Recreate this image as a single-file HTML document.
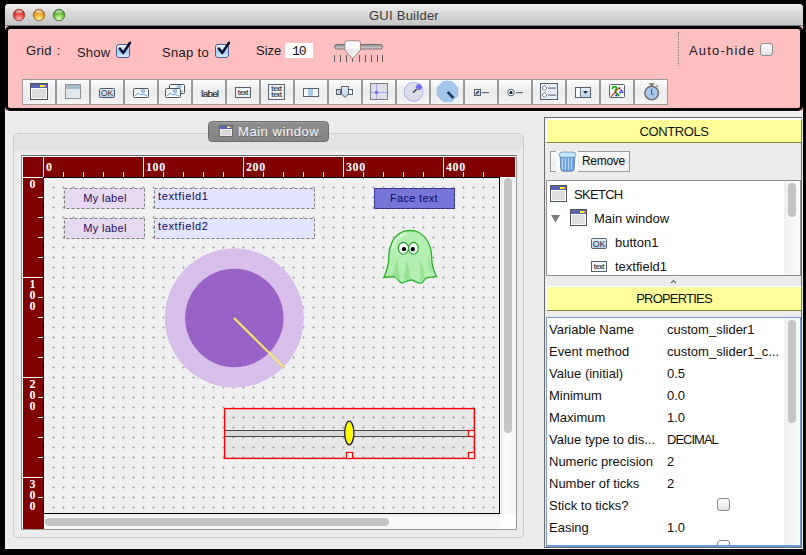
<!DOCTYPE html>
<html><head><meta charset="utf-8">
<style>
*{margin:0;padding:0;box-sizing:border-box}
html,body{width:806px;height:555px;overflow:hidden;background:#000;font-family:"Liberation Sans",sans-serif;position:relative}
div,span,svg{position:absolute}
.lbl{font-size:13px;color:#1a1a1a;white-space:nowrap;line-height:15px}
.btn{top:79px;width:34px;height:26px;background:linear-gradient(#fafafa,#ececec);border:1px solid #a0a0a0;border-left:2px solid #9c9c9c}
.cb{width:14px;height:14px;border-radius:3px;border:1px solid #4a5a9a;background:linear-gradient(#eef8ff,#bcdcfc 45%,#9ccaf6 55%,#d4efff)}
.cbo{width:13px;height:13px;border-radius:3px;border:1px solid #8a8a8a;background:linear-gradient(#ffffff,#f0f0f0 50%,#e2e2e2)}
.yh{background:#ffff99;border:1px solid;border-color:#fff #85854a #85854a #fff;font-size:13px;text-align:center;color:#111;line-height:21px}
.row{font-size:13px;color:#111;white-space:nowrap;line-height:15px}
</style></head><body>
<!-- window body -->
<div id="win" style="left:5px;top:4px;width:798px;height:545px;background:#ececec;border-radius:4px 4px 0 0;overflow:hidden;border-bottom:1px solid #fafafa"></div>
<!-- title bar -->
<div id="title" style="left:5px;top:4px;width:798px;height:22px;border-radius:4px 4px 0 0;background:linear-gradient(#f0f0f0,#d8d8d8 45%,#c6c6c6);border-bottom:1px solid #7c7c7c">
  <svg style="left:0;top:0" width="80" height="22">
<defs>
<radialGradient id="lr" cx="0.5" cy="0.85" r="0.8"><stop offset="0" stop-color="#ffc4bc"/><stop offset="0.5" stop-color="#f05048"/><stop offset="1" stop-color="#b01a18"/></radialGradient>
<radialGradient id="ly" cx="0.5" cy="0.85" r="0.8"><stop offset="0" stop-color="#fff2a8"/><stop offset="0.5" stop-color="#f4b030"/><stop offset="1" stop-color="#b07010"/></radialGradient>
<radialGradient id="lg" cx="0.5" cy="0.85" r="0.8"><stop offset="0" stop-color="#e4ffc8"/><stop offset="0.5" stop-color="#80cc50"/><stop offset="1" stop-color="#3a8a22"/></radialGradient>
<linearGradient id="lh" x1="0" y1="0" x2="0" y2="1"><stop offset="0" stop-color="#fff" stop-opacity="0.9"/><stop offset="1" stop-color="#fff" stop-opacity="0"/></linearGradient>
</defs>
<circle cx="14" cy="11" r="5.7" fill="url(#lr)" stroke="#8a3030" stroke-width="0.8"/>
<ellipse cx="14" cy="8.2" rx="3.3" ry="2" fill="url(#lh)"/>
<circle cx="34" cy="11" r="5.7" fill="url(#ly)" stroke="#8a6020" stroke-width="0.8"/>
<ellipse cx="34" cy="8.2" rx="3.3" ry="2" fill="url(#lh)"/>
<circle cx="54" cy="11" r="5.7" fill="url(#lg)" stroke="#3a6a2a" stroke-width="0.8"/>
<ellipse cx="54" cy="8.2" rx="3.3" ry="2" fill="url(#lh)"/>
</svg>
<div class="lbl" style="left:364px;top:4px;color:#383838;letter-spacing:0.25px">GUI Builder</div>
</div>
<!-- pink toolbar -->
<div style="left:5px;top:26px;width:798px;height:85px;background:#ffbfbf"></div>
<div id="tbi" style="left:5px;top:26px;width:798px;height:85px;border:3px solid #000;border-radius:5px;background:#ffbfbf"></div>
<div style="left:5px;top:111px;width:798px;height:1px;background:#fafafa"></div>

<div class="lbl" style="left:26px;top:43px;letter-spacing:0.3px;word-spacing:1px">Grid :</div>
<div class="lbl" style="left:77px;top:45px;letter-spacing:0.2px">Show</div>
<div class="cb" style="left:116px;top:44px"></div>
<div class="lbl" style="left:162px;top:45px;letter-spacing:0.3px">Snap to</div>
<div class="cb" style="left:215px;top:44px"></div>
<div class="lbl" style="left:256px;top:43px">Size</div>
<div style="left:285px;top:43px;width:28px;height:15px;background:#fff"></div>
<div style="left:292px;top:44px;font-family:'Liberation Mono',monospace;font-size:13px;line-height:15px;color:#111;letter-spacing:-1px">10</div>
<div style="left:678px;top:32px;width:1px;height:34px;border-left:1px dotted #777"></div>
<div class="lbl" style="left:689px;top:43px;letter-spacing:1.2px">Auto-hide</div>
<div class="cbo" style="left:760px;top:43px"></div>
<svg style="left:0;top:0" width="806" height="555">
<path d="M119.8,48.6 L123.3,52.9 L130,42.8" fill="none" stroke="#0a1030" stroke-width="2.6" stroke-linecap="round" stroke-linejoin="round"/>
<path d="M218.8,48.6 L222.3,52.9 L229,42.8" fill="none" stroke="#0a1030" stroke-width="2.6" stroke-linecap="round" stroke-linejoin="round"/>
<defs><linearGradient id="trk" x1="0" y1="0" x2="0" y2="1"><stop offset="0" stop-color="#8e8e8e"/><stop offset="1" stop-color="#d4d4d4"/></linearGradient>
<linearGradient id="thb" x1="0" y1="0" x2="0" y2="1"><stop offset="0" stop-color="#ffffff"/><stop offset="0.45" stop-color="#f4f4f4"/><stop offset="0.5" stop-color="#e6e6e6"/><stop offset="1" stop-color="#f2f2f2"/></linearGradient></defs>
<rect x="334.5" y="44.5" width="48" height="4.5" rx="2.2" fill="url(#trk)" stroke="#5c5c5c" stroke-width="0.8"/>
<rect x="334" y="55" width="1" height="7" fill="#5c5c5c"/><rect x="340" y="55" width="1" height="7" fill="#5c5c5c"/><rect x="346" y="55" width="1" height="7" fill="#5c5c5c"/><rect x="352" y="55" width="1" height="7" fill="#5c5c5c"/><rect x="359" y="55" width="1" height="7" fill="#5c5c5c"/><rect x="365" y="55" width="1" height="7" fill="#5c5c5c"/><rect x="371" y="55" width="1" height="7" fill="#5c5c5c"/><rect x="377" y="55" width="1" height="7" fill="#5c5c5c"/><rect x="382" y="55" width="1" height="7" fill="#5c5c5c"/><path d="M344.8,43 Q344.8,40.8 347,40.8 L358.3,40.8 Q360.5,40.8 360.5,43 L360.5,50.2 L352.6,58.8 L344.8,50.2 Z" fill="url(#thb)" stroke="#8a7070" stroke-width="0.8"/>

</svg>
<svg id="tbsvg" style="left:0;top:0" width="806" height="555" viewBox="0 0 806 555">
<defs>
<linearGradient id="bg" x1="0" y1="0" x2="0" y2="1"><stop offset="0" stop-color="#fdfdfd"/><stop offset="0.5" stop-color="#ebebeb"/><stop offset="1" stop-color="#f4f4f4"/></linearGradient>
<linearGradient id="blu" x1="0" y1="0" x2="0" y2="1"><stop offset="0" stop-color="#e6f0fc"/><stop offset="1" stop-color="#b4cdee"/></linearGradient>
<style>.ti{font-family:"Liberation Sans",sans-serif;fill:#3a3f44}</style>
</defs>
<rect x="22.5" y="79.5" width="33" height="25" fill="url(#bg)" stroke="#9a9a9a" shape-rendering="crispEdges"/>
<rect x="23" y="80" width="32" height="1" fill="#fff" shape-rendering="crispEdges"/>
<rect x="56.5" y="79.5" width="33" height="25" fill="url(#bg)" stroke="#9a9a9a" shape-rendering="crispEdges"/>
<rect x="57" y="80" width="32" height="1" fill="#fff" shape-rendering="crispEdges"/>
<rect x="90.5" y="79.5" width="33" height="25" fill="url(#bg)" stroke="#9a9a9a" shape-rendering="crispEdges"/>
<rect x="91" y="80" width="32" height="1" fill="#fff" shape-rendering="crispEdges"/>
<rect x="124.5" y="79.5" width="33" height="25" fill="url(#bg)" stroke="#9a9a9a" shape-rendering="crispEdges"/>
<rect x="125" y="80" width="32" height="1" fill="#fff" shape-rendering="crispEdges"/>
<rect x="158.5" y="79.5" width="33" height="25" fill="url(#bg)" stroke="#9a9a9a" shape-rendering="crispEdges"/>
<rect x="159" y="80" width="32" height="1" fill="#fff" shape-rendering="crispEdges"/>
<rect x="192.5" y="79.5" width="33" height="25" fill="url(#bg)" stroke="#9a9a9a" shape-rendering="crispEdges"/>
<rect x="193" y="80" width="32" height="1" fill="#fff" shape-rendering="crispEdges"/>
<rect x="226.5" y="79.5" width="33" height="25" fill="url(#bg)" stroke="#9a9a9a" shape-rendering="crispEdges"/>
<rect x="227" y="80" width="32" height="1" fill="#fff" shape-rendering="crispEdges"/>
<rect x="260.5" y="79.5" width="33" height="25" fill="url(#bg)" stroke="#9a9a9a" shape-rendering="crispEdges"/>
<rect x="261" y="80" width="32" height="1" fill="#fff" shape-rendering="crispEdges"/>
<rect x="294.5" y="79.5" width="33" height="25" fill="url(#bg)" stroke="#9a9a9a" shape-rendering="crispEdges"/>
<rect x="295" y="80" width="32" height="1" fill="#fff" shape-rendering="crispEdges"/>
<rect x="328.5" y="79.5" width="33" height="25" fill="url(#bg)" stroke="#9a9a9a" shape-rendering="crispEdges"/>
<rect x="329" y="80" width="32" height="1" fill="#fff" shape-rendering="crispEdges"/>
<rect x="362.5" y="79.5" width="33" height="25" fill="url(#bg)" stroke="#9a9a9a" shape-rendering="crispEdges"/>
<rect x="363" y="80" width="32" height="1" fill="#fff" shape-rendering="crispEdges"/>
<rect x="396.5" y="79.5" width="33" height="25" fill="url(#bg)" stroke="#9a9a9a" shape-rendering="crispEdges"/>
<rect x="397" y="80" width="32" height="1" fill="#fff" shape-rendering="crispEdges"/>
<rect x="430.5" y="79.5" width="33" height="25" fill="url(#bg)" stroke="#9a9a9a" shape-rendering="crispEdges"/>
<rect x="431" y="80" width="32" height="1" fill="#fff" shape-rendering="crispEdges"/>
<rect x="464.5" y="79.5" width="33" height="25" fill="url(#bg)" stroke="#9a9a9a" shape-rendering="crispEdges"/>
<rect x="465" y="80" width="32" height="1" fill="#fff" shape-rendering="crispEdges"/>
<rect x="498.5" y="79.5" width="33" height="25" fill="url(#bg)" stroke="#9a9a9a" shape-rendering="crispEdges"/>
<rect x="499" y="80" width="32" height="1" fill="#fff" shape-rendering="crispEdges"/>
<rect x="532.5" y="79.5" width="33" height="25" fill="url(#bg)" stroke="#9a9a9a" shape-rendering="crispEdges"/>
<rect x="533" y="80" width="32" height="1" fill="#fff" shape-rendering="crispEdges"/>
<rect x="566.5" y="79.5" width="33" height="25" fill="url(#bg)" stroke="#9a9a9a" shape-rendering="crispEdges"/>
<rect x="567" y="80" width="32" height="1" fill="#fff" shape-rendering="crispEdges"/>
<rect x="600.5" y="79.5" width="33" height="25" fill="url(#bg)" stroke="#9a9a9a" shape-rendering="crispEdges"/>
<rect x="601" y="80" width="32" height="1" fill="#fff" shape-rendering="crispEdges"/>
<rect x="634.5" y="79.5" width="33" height="25" fill="url(#bg)" stroke="#9a9a9a" shape-rendering="crispEdges"/>
<rect x="635" y="80" width="32" height="1" fill="#fff" shape-rendering="crispEdges"/>
<g><rect x="30.5" y="83.5" width="17" height="16" fill="#fff" stroke="#4a5258"/><rect x="31" y="84" width="16" height="4" fill="#5a62b6"/><rect x="40" y="85" width="4" height="2" fill="#ffff00"/><rect x="44" y="85" width="2" height="2" fill="#f08888"/><rect x="32" y="89" width="14" height="9" fill="#dcdcdc"/><rect x="65.5" y="84.5" width="15" height="14" fill="#dfe8ec" stroke="#959595"/><rect x="66" y="85" width="14" height="4" fill="#a3bccb"/><rect x="99.5" y="88.5" width="15" height="9" rx="1" fill="url(#blu)" stroke="#4e565e"/><text x="107" y="96.3" class="ti" font-size="8.8" text-anchor="middle" letter-spacing="0">OK</text><rect x="133.5" y="88.5" width="15" height="9" rx="1" fill="#f4faff" stroke="#4e565e"/><path d="M135,96 L138,93 L141,95 L143,94 L147,96" fill="none" stroke="#6ea0d8" stroke-width="1"/><circle cx="143" cy="91" r="1.8" fill="#a8c8ec" stroke="#6ea0d8" stroke-width="0.7"/><rect x="169.5" y="84.5" width="15" height="9" rx="1" fill="#f4faff" stroke="#4e565e"/><path d="M171,92 L174,89 L177,91 L179,90 L183,92" fill="none" stroke="#6ea0d8" stroke-width="1"/><circle cx="179" cy="87" r="1.8" fill="#a8c8ec" stroke="#6ea0d8" stroke-width="0.7"/><rect x="165.5" y="88.5" width="15" height="9" rx="1" fill="#f4faff" stroke="#4e565e"/><path d="M167,96 L170,93 L173,95 L175,94 L179,96" fill="none" stroke="#6ea0d8" stroke-width="1"/><circle cx="175" cy="91" r="1.8" fill="#a8c8ec" stroke="#6ea0d8" stroke-width="0.7"/><text x="209.8" y="96.8" class="ti" font-size="9.8" text-anchor="middle" letter-spacing="-0.75" style="fill:#2a2e33;stroke:#2a2e33;stroke-width:0.2">label</text><rect x="235.5" y="87.5" width="15" height="10" fill="#f0f6fc" stroke="#59616a"/><text x="243" y="94.5" class="ti" font-size="6.5" font-weight="bold" text-anchor="middle" letter-spacing="-0.3">text</text><rect x="268.5" y="84.5" width="16" height="15" fill="#eef4fa" stroke="#59616a"/><text x="276.5" y="90.5" class="ti" font-size="6.5" font-weight="bold" text-anchor="middle" letter-spacing="-0.3">text</text><text x="276.5" y="97" class="ti" font-size="6.5" font-weight="bold" text-anchor="middle" letter-spacing="-0.3">text</text><rect x="303.5" y="88.5" width="15" height="8" fill="#fafafa" stroke="#59616a"/><rect x="308" y="89" width="5" height="7" fill="#a8c8ec"/><rect x="336.5" y="89.5" width="4" height="5" fill="#b8d4f0" stroke="#59616a"/><rect x="348.5" y="89.5" width="4" height="5" fill="#f4f8fc" stroke="#59616a"/><path d="M341.5,86.5 L348.5,86.5 L348.5,94 L345,97.5 L341.5,94 Z" fill="url(#blu)" stroke="#59616a"/><rect x="370.5" y="83.5" width="17" height="16" fill="#e0e0ea" stroke="#808080" stroke-width="1"/><rect x="376" y="84" width="1" height="15" fill="#a8a8ff"/><rect x="371" y="92" width="16" height="1" fill="#a8a8ff"/><rect x="375" y="91" width="3" height="3" fill="#7070f8"/><circle cx="413.5" cy="91.9" r="9.4" fill="#dcdce8" stroke="#a8a8f4" stroke-width="0.9"/><line x1="413" y1="92.8" x2="416.7" y2="89.1" stroke="#222" stroke-width="1.3"/><rect x="416.2" y="84.2" width="5.6" height="5.6" rx="1.2" fill="#6c6cf4" transform="rotate(45 419 87)"/><path d="M443.5,81 L451.5,81 L458,87.5 L458,95.5 L451.5,102 L443.5,102 L437,95.5 L437,87.5 Z" fill="#a4c6ea" stroke="#a4c6ea" stroke-width="2.5" stroke-linejoin="round" transform="translate(447.5 91.5) scale(0.92) translate(-447.5 -91.5)"/><line x1="447.6" y1="91.8" x2="453.4" y2="98" stroke="#1a3a5a" stroke-width="2.6"/><rect x="474.5" y="89.5" width="6" height="6" fill="url(#blu)" stroke="#59616a"/><path d="M476,94 L479,91" stroke="#222" stroke-width="1.2"/><rect x="482" y="92" width="7" height="1.2" fill="#667078"/><circle cx="511" cy="92.5" r="3.3" fill="#eef6ff" stroke="#59616a"/><circle cx="511" cy="92.5" r="1.5" fill="#111"/><rect x="516" y="92" width="7" height="1.2" fill="#667078"/><rect x="540.5" y="83.5" width="17" height="16" fill="#e6eef6" stroke="#59616a"/><path d="M544.5,85.5 L547,88 L544.5,90.5 L542,88 Z" fill="#fff" stroke="#666" stroke-width="0.8"/><rect x="548" y="87.5" width="8" height="1.2" fill="#6c7680"/><path d="M544.5,92.5 L547,95 L544.5,97.5 L542,95 Z" fill="#fff" stroke="#666" stroke-width="0.8"/><rect x="548" y="94.5" width="8" height="1.2" fill="#6c7680"/><rect x="575.5" y="87.5" width="15" height="10" fill="url(#blu)" stroke="#59616a"/><rect x="576" y="88" width="4" height="9" fill="#fafafa"/><rect x="580" y="88" width="0.8" height="9" fill="#59616a"/><path d="M583,91 L588,91 L585.5,94 Z" fill="#333"/><rect x="609.5" y="84.5" width="15" height="13" rx="1" fill="#fbfbfb" stroke="#59616a"/><path d="M612.5,88.5 C612.5,86 616.5,86 616.5,88.2 C616.5,90 614,90.5 615.5,92.5 L618.8,95.5" fill="none" stroke="#00b400" stroke-width="1.7" stroke-linecap="round"/><circle cx="619.5" cy="88.2" r="1" fill="#1a1aff"/><circle cx="621.2" cy="90.6" r="1" fill="#1a1aff"/><circle cx="622.5" cy="92.3" r="1" fill="#1a1aff"/><circle cx="620" cy="92.5" r="0.9" fill="#1a1aff"/><circle cx="616.2" cy="95.6" r="1" fill="#1a1aff"/><line x1="611" y1="96.8" x2="618.8" y2="87.8" stroke="#ff2020" stroke-width="1.1"/><circle cx="651.7" cy="93" r="6.8" fill="#a8c8ec" stroke="#6e6e6e" stroke-width="1.5"/><rect x="650.5" y="84.2" width="2.4" height="2.2" fill="#6e6e6e"/><rect x="649" y="83.2" width="5.5" height="1.2" fill="#6e6e6e"/><rect x="656.6" y="85.3" width="1.6" height="1.6" fill="#6e6e6e" transform="rotate(45 657.4 86.1)"/><line x1="651.6" y1="88.8" x2="651.6" y2="94.2" stroke="#505050" stroke-width="1"/><line x1="651.6" y1="94.2" x2="653.6" y2="94.2" stroke="#505050" stroke-width="1"/></g>
</svg>

<!-- left group -->
<div style="left:13px;top:133px;width:511px;height:405px;border:1px solid #cdcdcd;border-radius:5px;background:#ebebeb"></div>
<div style="left:14px;top:134px;width:509px;height:16px;border-radius:4px 4px 0 0;background:#e3e3e3"></div>

<!-- right panel -->
<div style="left:544px;top:117px;width:258px;height:431px;border:1px solid #6a6a6a;background:#ececec"></div>
<div class="yh" style="left:545px;top:118px;width:257px;height:25px;border-width:2px 1px 1px 2px;line-height:24px;letter-spacing:-0.4px">CONTROLS</div>
<div class="yh" style="left:546px;top:286px;width:256px;height:25px;line-height:23px;letter-spacing:-0.8px">PROPERTIES</div>


<svg id="cv" style="left:0;top:0" width="806" height="555" viewBox="0 0 806 555">
<defs>
<pattern id="grid" patternUnits="userSpaceOnUse" x="38" y="172" width="10" height="10">
<rect x="4" y="5" width="3" height="1" fill="#c2c2c2"/><rect x="5" y="4" width="1" height="3" fill="#c2c2c2"/><rect x="5" y="5" width="1" height="1" fill="#a8a8a8"/>
</pattern>
<style>.rn{font-family:"Liberation Serif",serif;font-weight:bold;font-size:12px;fill:#fff;letter-spacing:0.6px}
.wt{font-family:"Liberation Sans",sans-serif;font-size:11px}</style>
</defs>
<g shape-rendering="crispEdges">
<rect x="21" y="155" width="496" height="375" fill="#f6f6f6"/>
<rect x="21" y="155" width="496" height="1" fill="#6e6e6e"/>
<rect x="21" y="155" width="1" height="375" fill="#8a8a8a"/>
<rect x="516" y="155" width="1" height="375" fill="#9a9a9a"/>
<rect x="21" y="529" width="496" height="1" fill="#9a9a9a"/>
<rect x="22" y="156" width="494" height="1" fill="#fff"/>
<rect x="22" y="156" width="1" height="373" fill="#fff"/>
<rect x="23" y="157" width="492" height="20" fill="#800000"/>
<rect x="23" y="157" width="21" height="372" fill="#800000"/>
<rect x="44" y="177" width="456" height="337" fill="#f0f0f0"/>
<rect x="44" y="177" width="456" height="337" fill="url(#grid)"/>
<rect x="43" y="157" width="1" height="20" fill="#fff"/>
<text x="46" y="171" class="rn">0</text>
<rect x="63" y="172" width="1" height="5" fill="#fff"/>
<rect x="83" y="172" width="1" height="5" fill="#fff"/>
<rect x="103" y="172" width="1" height="5" fill="#fff"/>
<rect x="123" y="172" width="1" height="5" fill="#fff"/>
<rect x="143" y="157" width="1" height="20" fill="#fff"/>
<text x="146" y="171" class="rn">100</text>
<rect x="163" y="172" width="1" height="5" fill="#fff"/>
<rect x="183" y="172" width="1" height="5" fill="#fff"/>
<rect x="203" y="172" width="1" height="5" fill="#fff"/>
<rect x="223" y="172" width="1" height="5" fill="#fff"/>
<rect x="243" y="157" width="1" height="20" fill="#fff"/>
<text x="246" y="171" class="rn">200</text>
<rect x="263" y="172" width="1" height="5" fill="#fff"/>
<rect x="283" y="172" width="1" height="5" fill="#fff"/>
<rect x="303" y="172" width="1" height="5" fill="#fff"/>
<rect x="323" y="172" width="1" height="5" fill="#fff"/>
<rect x="343" y="157" width="1" height="20" fill="#fff"/>
<text x="346" y="171" class="rn">300</text>
<rect x="363" y="172" width="1" height="5" fill="#fff"/>
<rect x="383" y="172" width="1" height="5" fill="#fff"/>
<rect x="403" y="172" width="1" height="5" fill="#fff"/>
<rect x="423" y="172" width="1" height="5" fill="#fff"/>
<rect x="443" y="157" width="1" height="20" fill="#fff"/>
<text x="446" y="171" class="rn">400</text>
<rect x="463" y="172" width="1" height="5" fill="#fff"/>
<rect x="483" y="172" width="1" height="5" fill="#fff"/>
<rect x="23" y="177" width="20" height="1" fill="#fff"/>
<text x="32.8" y="188" class="rn" text-anchor="middle">0</text>
<rect x="38" y="197" width="5" height="1" fill="#fff"/>
<rect x="38" y="217" width="5" height="1" fill="#fff"/>
<rect x="38" y="237" width="5" height="1" fill="#fff"/>
<rect x="38" y="257" width="5" height="1" fill="#fff"/>
<rect x="23" y="277" width="20" height="1" fill="#fff"/>
<text x="32.8" y="288" class="rn" text-anchor="middle">1</text>
<text x="32.8" y="299" class="rn" text-anchor="middle">0</text>
<text x="32.8" y="310" class="rn" text-anchor="middle">0</text>
<rect x="38" y="297" width="5" height="1" fill="#fff"/>
<rect x="38" y="317" width="5" height="1" fill="#fff"/>
<rect x="38" y="337" width="5" height="1" fill="#fff"/>
<rect x="38" y="357" width="5" height="1" fill="#fff"/>
<rect x="23" y="377" width="20" height="1" fill="#fff"/>
<text x="32.8" y="388" class="rn" text-anchor="middle">2</text>
<text x="32.8" y="399" class="rn" text-anchor="middle">0</text>
<text x="32.8" y="410" class="rn" text-anchor="middle">0</text>
<rect x="38" y="397" width="5" height="1" fill="#fff"/>
<rect x="38" y="417" width="5" height="1" fill="#fff"/>
<rect x="38" y="437" width="5" height="1" fill="#fff"/>
<rect x="38" y="457" width="5" height="1" fill="#fff"/>
<rect x="23" y="477" width="20" height="1" fill="#fff"/>
<text x="32.8" y="488" class="rn" text-anchor="middle">3</text>
<text x="32.8" y="499" class="rn" text-anchor="middle">0</text>
<text x="32.8" y="510" class="rn" text-anchor="middle">0</text>
<rect x="38" y="497" width="5" height="1" fill="#fff"/>

<rect x="43" y="177" width="457" height="1" fill="#000"/>
<rect x="43" y="177" width="1" height="337" fill="#000"/>
<rect x="499" y="177" width="1" height="337" fill="#000"/>
<rect x="43" y="513" width="457" height="1" fill="#000"/>
</g>

<!-- widgets -->
<g>
<rect x="64.5" y="188.5" width="80" height="20" fill="#e6daf2" stroke="#7a7a7a" stroke-dasharray="3 2"/>
<text x="105" y="202" class="wt" text-anchor="middle" fill="#2e0a5c" letter-spacing="0.3">My label</text>
<rect x="64.5" y="218.5" width="80" height="20" fill="#e6daf2" stroke="#7a7a7a" stroke-dasharray="3 2"/>
<text x="105" y="232" class="wt" text-anchor="middle" fill="#2e0a5c" letter-spacing="0.3">My label</text>
<rect x="154.5" y="188.5" width="160" height="20" fill="#e2e4fc" stroke="#7a7a7a" stroke-dasharray="3 2"/>
<text x="158" y="200" class="wt" fill="#0a0a6e" letter-spacing="0.65">textfield1</text>
<rect x="154.5" y="218.5" width="160" height="20" fill="#e2e4fc" stroke="#7a7a7a" stroke-dasharray="3 2"/>
<text x="158" y="230" class="wt" fill="#0a0a6e" letter-spacing="0.65">textfield2</text>
<rect x="374.5" y="188.5" width="80" height="20" fill="#7676d8" stroke="#4a4ae0"/>
<rect x="374.5" y="188.5" width="80" height="20" fill="none" stroke="#333366" stroke-dasharray="3 2"/>
<text x="414" y="202" class="wt" text-anchor="middle" fill="#0c0c64" letter-spacing="0.3">Face text</text>
<circle cx="234.3" cy="318" r="69.5" fill="#d7bfe9"/>
<circle cx="234.3" cy="318" r="49.2" fill="#9962c6"/>
<line x1="234" y1="318" x2="283.5" y2="367" stroke="#f4ea64" stroke-width="2"/>
</g>
<!-- slider -->
<g>
<rect x="224.5" y="408.5" width="250" height="50" fill="#000" fill-opacity="0.035"/>
<rect x="224" y="430" width="245" height="7" fill="#dadada"/>
<rect x="224" y="430" width="245" height="1" fill="#4a4a4a"/>
<rect x="224" y="436" width="245" height="1" fill="#4a4a4a"/>
<rect x="224.6" y="408.6" width="249.8" height="49.8" fill="none" stroke="#ff0000" stroke-width="1.4"/>
<ellipse cx="349.3" cy="433" rx="4.6" ry="11.8" fill="#ffff00" stroke="#1c1c48" stroke-width="1.3"/>
<rect x="346.5" y="452.5" width="6" height="6" fill="#fff" stroke="#ff0000" stroke-width="1.2"/>
<rect x="468.5" y="430.5" width="6" height="6" fill="#fff" stroke="#ff0000" stroke-width="1.2"/>
<rect x="468.5" y="452.5" width="6" height="6" fill="#fff" stroke="#ff0000" stroke-width="1.2"/>
</g>
<!-- ghost -->
<g>
<path d="M384.1,277.3 C387,270 389,265 388.8,258 C388.5,247 393,236 402,232 C406,230 414,230 418,232 C427,237 431.5,247 431.7,258 C431.8,265 433,270 436.6,276.6 C433,277 429,277 426.2,278.1 C424,280 422.5,283.5 420.2,283.3 C417,283 414,280 411.3,280 C407,280 404,283 401.6,282.9 C399,282.5 397,277 394.1,276.6 C390,276.5 387,277.5 384.1,277.3 Z" fill="#b3efb0" stroke="#26b026" stroke-width="1.3"/>
<path d="M393,247 C394,240 399,236 405,234" fill="none" stroke="#d6f8d4" stroke-width="2.5" stroke-linecap="round"/>
<path d="M392,275 C395,268 396,262 397,258 C398,265 399,272 400,281 Z" fill="#90dc8c" opacity="0.7"/>
<path d="M404,279 C405,270 406,264 407,261 C409,268 410,274 410,280 Z" fill="#90dc8c" opacity="0.8"/>
<path d="M420,281 C421,272 420,265 419,260 C423,266 425,272 425,278 Z" fill="#90dc8c" opacity="0.7"/>
<path d="M430,270 C428,265 427,260 428,255 C431,262 433,268 434,273 Z" fill="#90dc8c" opacity="0.5"/>
<ellipse cx="403.4" cy="248.3" rx="5.1" ry="5.9" fill="#fff" stroke="#26a026" stroke-width="1.1"/>
<ellipse cx="413.5" cy="248.3" rx="4.8" ry="5.9" fill="#fff" stroke="#26a026" stroke-width="1.1"/>
<circle cx="404" cy="249.2" r="2.1" fill="#000"/>
<circle cx="412.8" cy="249.2" r="2.1" fill="#000"/>
</g>

<!-- scrollbars -->
<defs><linearGradient id="vtr" x1="0" y1="0" x2="1" y2="0"><stop offset="0" stop-color="#ededed"/><stop offset="0.35" stop-color="#fafafa"/><stop offset="1" stop-color="#f6f6f6"/></linearGradient>
<linearGradient id="htr" x1="0" y1="0" x2="0" y2="1"><stop offset="0" stop-color="#ededed"/><stop offset="0.35" stop-color="#fafafa"/><stop offset="1" stop-color="#f6f6f6"/></linearGradient></defs>
<rect x="500" y="178" width="16" height="336" fill="url(#vtr)"/>
<rect x="44" y="514" width="456" height="15" fill="url(#htr)"/>
<rect x="504" y="178" width="8" height="255" rx="4" fill="#c4c4c4"/>
<rect x="45" y="518" width="344" height="8" rx="4" fill="#c4c4c4"/>
<rect x="500" y="514" width="16" height="15" fill="#fff"/>
</svg>


<!-- Main window tab -->
<div style="left:208px;top:121px;width:121px;height:21px;border-radius:4px;background:linear-gradient(#8e8e8e,#848484);border:1px solid #6e6e6e;box-shadow:inset 0 1px 0 #a0a0a0"></div>
<svg style="left:0;top:0" width="806" height="555">
<rect x="219.5" y="125.5" width="13" height="11" fill="#f0f0f0" stroke="#5a5a5a" stroke-width="0.8"/>
<rect x="220" y="126" width="12" height="3" fill="#5a62b6"/>
<rect x="227" y="126.5" width="3" height="1.5" fill="#ffff40"/><rect x="230" y="126.5" width="1.5" height="1.5" fill="#f08888"/>
<rect x="221" y="130" width="10" height="5.5" fill="#d8d8d8"/>
</svg>
<div class="lbl" style="left:238px;top:124px;color:#f8f8f8;letter-spacing:0.55px;text-shadow:0 1px 0 rgba(0,0,0,0.3)">Main window</div>

<!-- Remove button -->
<div style="left:550px;top:151px;width:80px;height:21px;border:1px solid #9a9a9a;background:linear-gradient(#fdfdfd,#ececec 60%,#f6f6f6)"></div>
<div style="left:556px;top:151px;width:22px;height:21px;background:#fafafa"></div>
<svg style="left:0;top:0" width="806" height="555">
<defs><linearGradient id="tr" x1="0" y1="0" x2="1" y2="0"><stop offset="0" stop-color="#5a8ed8"/><stop offset="0.4" stop-color="#a8d0f8"/><stop offset="1" stop-color="#4a7ec8"/></linearGradient></defs>
<path d="M560.2,156 L560.8,169 Q561,171.3 563,171.3 L572,171.3 Q574,171.3 574.2,169 L574.8,156 Z" fill="#6a9ee0" stroke="#5a7aa8" stroke-width="0.8"/>
<path d="M562.3,158 L562.6,169.5 M565.3,158 L565.4,170 M568.5,158 L568.5,170 M571.6,158 L571.5,169.5" stroke="#b4dcfc" stroke-width="1.2"/>
<path d="M559.3,154.5 Q559.3,152 562,152 L573,152 Q575.7,152 575.7,154.5 L575.7,155.5 Q575.7,157.3 573,157.3 L562,157.3 Q559.3,157.3 559.3,155.5 Z" fill="#c4e6fa" stroke="#6a8ab8" stroke-width="0.8"/>
</svg>
<div style="left:582px;top:154px;font-size:12px;color:#111;line-height:14px;white-space:nowrap;letter-spacing:-0.3px">Remove</div>

<!-- tree box -->
<div style="left:546px;top:180px;width:255px;height:96px;border:1px solid #8e8e8e;background:#fff"></div>
<div style="left:784px;top:181px;width:16px;height:94px;background:linear-gradient(90deg,#f0f0f0,#fafafa)"></div>
<div style="left:788px;top:183px;width:8px;height:34px;border-radius:4px;background:#c4c4c4"></div>
<svg style="left:0;top:0" width="806" height="555">
<defs><symbol id="wicon" viewBox="0 0 17 17">
<rect x="0.5" y="0.5" width="16" height="16" fill="#fff" stroke="#4e565c"/>
<rect x="1" y="1" width="15" height="4" fill="#5a62b6"/>
<rect x="10" y="2" width="4" height="2" fill="#ffff00"/><rect x="14" y="2" width="1.5" height="2" fill="#f08888"/>
<rect x="2" y="6" width="13" height="9" fill="#dedede"/>
</symbol></defs>
<use href="#wicon" x="550" y="185" width="17" height="17"/>
<use href="#wicon" x="570" y="209" width="17" height="17"/>
<path d="M551,215 L560,215 L555.5,222.5 Z" fill="#7a7a7a"/>
<rect x="591.5" y="238.5" width="15" height="10" rx="1" fill="url(#blu)" stroke="#59616a"/>
<text x="599" y="246.5" font-family="Liberation Sans" font-size="8.8" fill="#2a3038" text-anchor="middle">OK</text>
<rect x="591.5" y="261.5" width="15" height="10" fill="#f0f6fc" stroke="#59616a"/>
<text x="599" y="268.5" font-family="Liberation Sans" font-size="6.5" font-weight="bold" fill="#3a3f44" text-anchor="middle" letter-spacing="-0.3">text</text>
</svg>
<div class="row" style="left:574px;top:187px;letter-spacing:-0.7px">SKETCH</div>
<div class="row" style="left:594px;top:211px">Main window</div>
<div class="row" style="left:615px;top:235px">button1</div>
<div class="row" style="left:615px;top:259px">textfield1</div>
<svg style="left:0;top:0" width="806" height="555"><path d="M671,283 L673.5,280.5 L676,283" fill="none" stroke="#6a6a6a" stroke-width="1.2"/></svg>

<!-- properties box -->
<div style="left:546px;top:317px;width:255px;height:230px;border:1px solid #7a9cc8;border-bottom:2px solid #6c9ad4;background:#fff"></div>
<div style="left:784px;top:318px;width:16px;height:227px;background:linear-gradient(90deg,#f0f0f0,#fafafa)"></div>
<div style="left:788px;top:320px;width:8px;height:103px;border-radius:4px;background:#c4c4c4"></div>
<div class="row" style="left:549px;top:322px">Variable Name</div>
<div class="row" style="left:667px;top:322px">custom_slider1</div>
<div class="row" style="left:549px;top:344px">Event method</div>
<div class="row" style="left:667px;top:344px">custom_slider1_c...</div>
<div class="row" style="left:549px;top:366px">Value (initial)</div>
<div class="row" style="left:667px;top:366px">0.5</div>
<div class="row" style="left:549px;top:388px">Minimum</div>
<div class="row" style="left:667px;top:388px">0.0</div>
<div class="row" style="left:549px;top:410px">Maximum</div>
<div class="row" style="left:667px;top:410px">1.0</div>
<div class="row" style="left:549px;top:432px">Value type to dis...</div>
<div class="row" style="left:667px;top:432px;letter-spacing:-1px">DECIMAL</div>
<div class="row" style="left:549px;top:454px">Numeric precision</div>
<div class="row" style="left:667px;top:454px">2</div>
<div class="row" style="left:549px;top:476px">Number of ticks</div>
<div class="row" style="left:667px;top:476px">2</div>
<div class="row" style="left:549px;top:498px">Stick to ticks?</div>
<div class="cbo" style="left:717px;top:498px"></div>
<div class="row" style="left:549px;top:520px">Easing</div>
<div class="row" style="left:667px;top:520px">1.0</div>
<div style="left:717px;top:540px;width:14px;height:5px;overflow:hidden"><div class="cbo" style="left:0;top:0"></div></div>

</body></html>
